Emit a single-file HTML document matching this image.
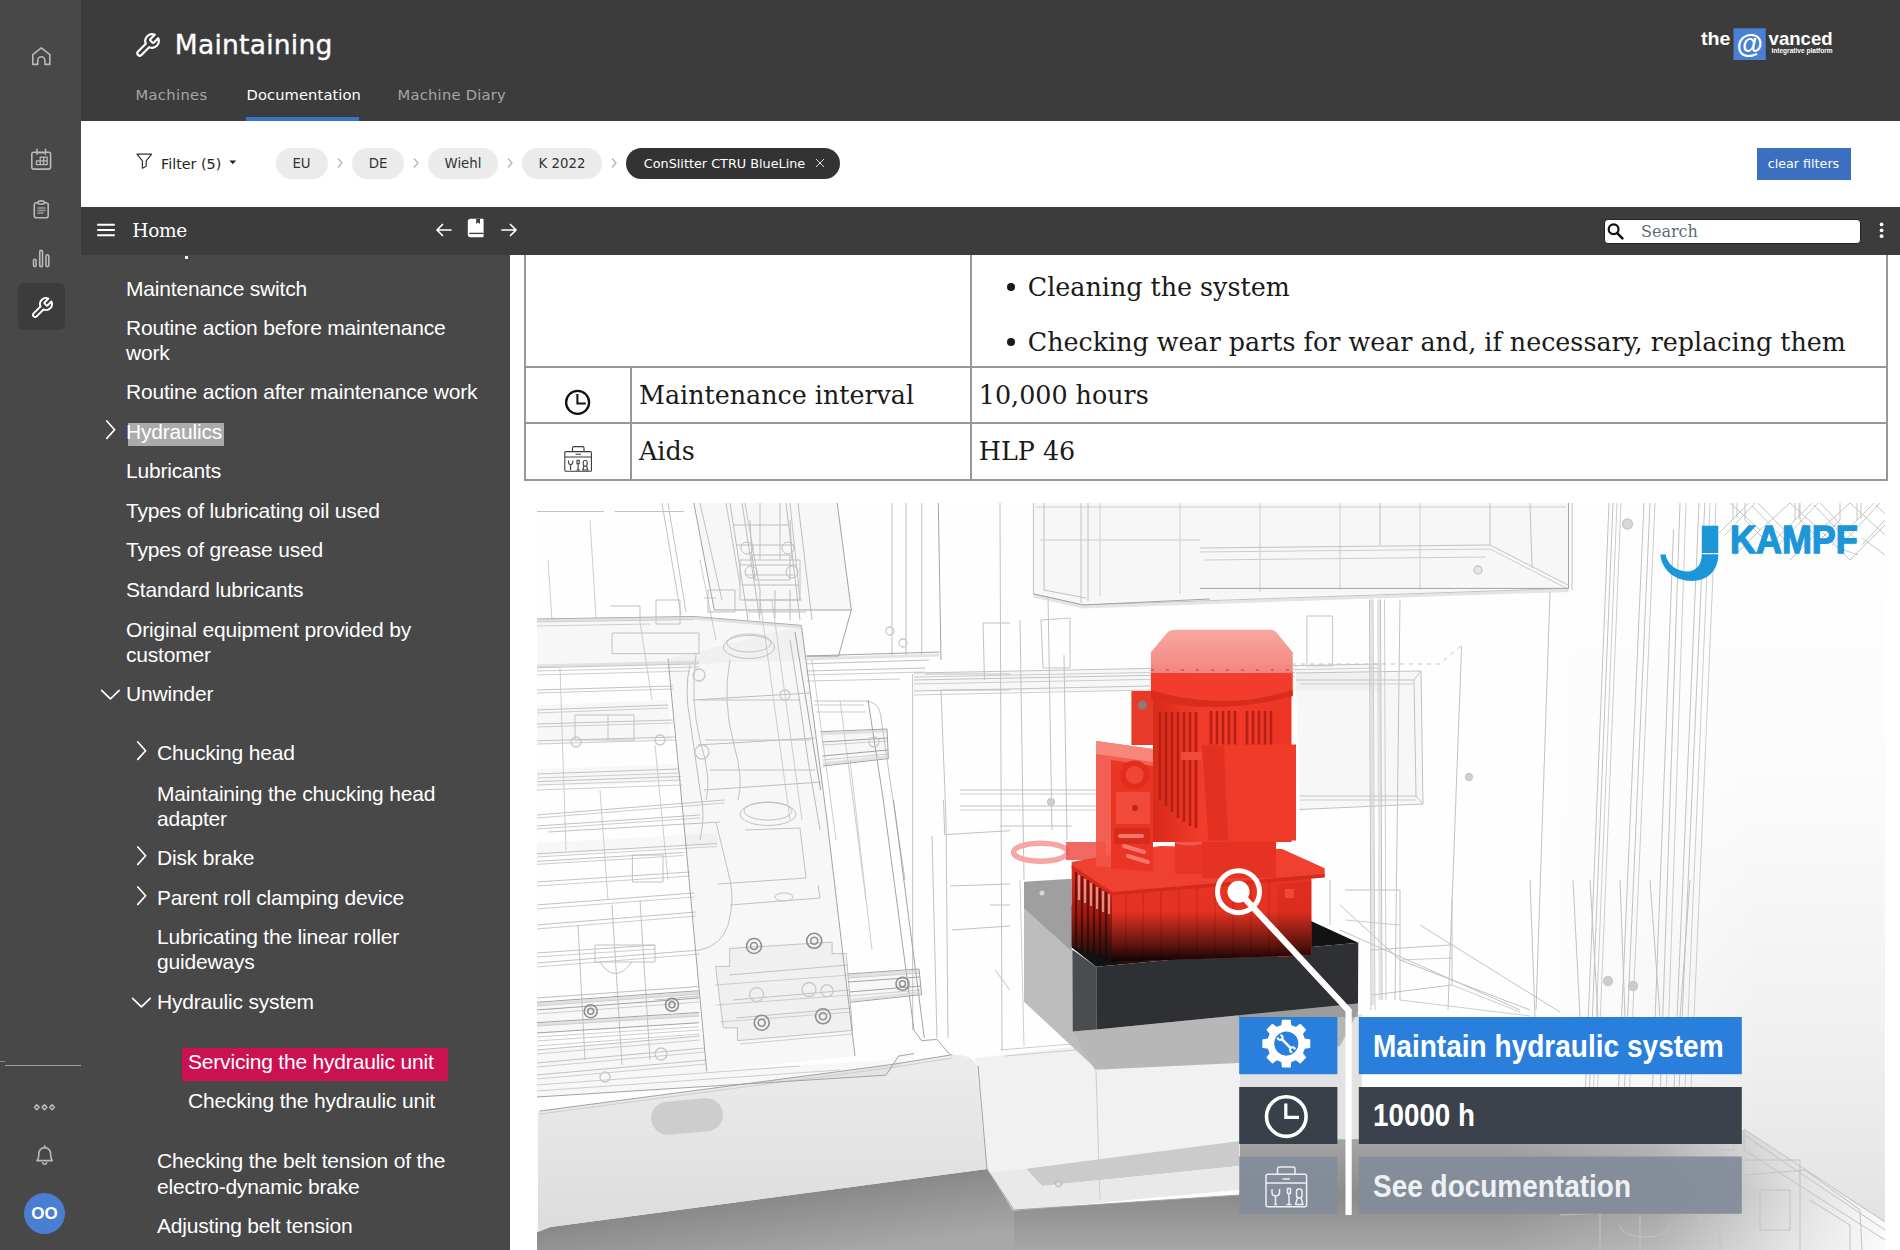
<!DOCTYPE html>
<html lang="en">
<head>
<meta charset="utf-8">
<title>Maintaining</title>
<style>
*{box-sizing:border-box;margin:0;padding:0}
html,body{width:1900px;height:1250px;overflow:hidden;background:#484848;font-family:"Liberation Sans",sans-serif}
.abs{position:absolute}
#rail{position:absolute;left:0;top:0;width:80.5px;height:1250px;background:#484848}
#rail svg{position:absolute;fill:none;stroke:#b9b9b9;stroke-width:1.6;stroke-linecap:round;stroke-linejoin:round}
#rail .active{position:absolute;left:17.5px;top:283px;width:47.5px;height:46.5px;border-radius:6px;background:#3c3c3c}
#rail .sep{position:absolute;left:5px;top:1065px;width:76px;height:1px;background:#9c9c9c}
#rail .sep2{position:absolute;left:0;top:1061px;width:5px;height:1px;background:#8a8a8a}
#rail .avatar{position:absolute;left:24px;top:1193px;width:41px;height:41px;border-radius:50%;background:#4a7ed2;color:#fff;font-size:17px;font-weight:bold;text-align:center;line-height:41px}
#header{position:absolute;left:80.5px;top:0;width:1819.5px;height:120.5px;background:#3c3c3c;font-family:"DejaVu Sans","Liberation Sans",sans-serif}
#header h1{position:absolute;left:94.3px;top:28.6px;font-size:26.5px;font-weight:normal;color:#fff;line-height:32px;letter-spacing:.25px;-webkit-text-stroke:.35px #fff}
#header .tab{position:absolute;top:85px;font-size:14.7px;color:#a6a6a6;line-height:20px;letter-spacing:.1px}
#header .tab.on{color:#fff}
#header .underline{position:absolute;left:165.5px;top:117px;width:112.5px;height:4px;background:#3a73cc}
#filter{position:absolute;left:80.5px;top:120.5px;width:1819.5px;height:86.5px;background:#fff;font-family:"DejaVu Sans","Liberation Sans",sans-serif}
#filter .lbl{position:absolute;left:80.5px;top:33.4px;font-size:14.3px;color:#222;line-height:20px}
.chip{position:absolute;top:27px;height:31px;border-radius:16px;background:#ebebeb;color:#333;font-size:13.3px;line-height:31px;text-align:center}
.chip.dark{background:#333;color:#fff}
.sepc{position:absolute;top:36.5px;fill:none;stroke:#b0b0b0;stroke-width:1.2}
#clear{position:absolute;left:1676px;top:27px;width:94px;height:32px;background:#3c6fc0;color:#fff;font-size:12.7px;line-height:32px;text-align:center}
#toolbar{position:absolute;left:80.5px;top:206.6px;width:1819.5px;height:48.2px;background:#3c3c3c}
#toolbar .home{position:absolute;left:51.8px;top:11.9px;font-family:"DejaVu Serif","Liberation Serif",serif;font-size:18.6px;letter-spacing:-.35px;color:#fff;line-height:26px}
#search{position:absolute;left:1523px;top:12.2px;width:257px;height:24.8px;border-radius:4px;background:#fff;border:1px solid #222;color:#5f6b78;font-family:"DejaVu Serif","Liberation Serif",serif;font-size:16px;line-height:23.4px;padding-left:36.5px}
#tree{position:absolute;left:81px;top:255px;width:429px;height:995px;background:#484848;color:#fff;font-size:21px;letter-spacing:-.19px;line-height:25px;overflow:hidden}
#tree div{position:absolute;white-space:nowrap;margin-top:0.5px;margin-left:-1px}
#tree svg{position:absolute;fill:none;stroke:#fff;stroke-width:1.7;stroke-linecap:round;stroke-linejoin:round}
#doc{position:absolute;left:510px;top:255px;width:1390px;height:995px;background:#fff;overflow:hidden;font-family:"DejaVu Serif","Liberation Serif",serif;font-size:25px;color:#1a1a1a}
#doc .tl{position:absolute}
#doc .tx{position:absolute;white-space:nowrap;font-size:25.36px;line-height:32px;letter-spacing:0;margin-top:1px}
#doc .bl{position:absolute;width:8px;height:8px;border-radius:50%;background:#1a1a1a}
#gap{position:absolute;left:500px;top:255px;width:10px;height:995px;background:#3d3d3d}
</style>
</head>
<body>
<div id="rail">
  <div class="active"></div>

  <svg style="left:29px;top:44px" width="24" height="24" viewBox="29 44 24 24"><path d="M41.3 47.9 L32.8 54.6 V64.4 H37.7 V60.4 A3.6 3.6 0 0 1 44.9 60.4 V64.4 H49.8 V54.6 Z"/></svg>
  <svg style="left:29px;top:146px" width="24" height="26" viewBox="29 146 24 26"><rect x="31.8" y="152.3" width="18.8" height="16.8" rx="2"/><path d="M37 149.3 V154.3 M45.5 149.3 V154.3 M37 152.8 H45.5" /><path d="M40.2 157.2 H47.2 V164.6 H36.4 V160.9 H47.2 M40.2 157.2 V164.6 M43.7 157.2 V164.6" stroke-width="1.3"/></svg>
  <svg style="left:29px;top:197px" width="24" height="24" viewBox="29 197 24 24"><rect x="34.3" y="202.8" width="13.9" height="15" rx="2"/><ellipse cx="41.2" cy="202.6" rx="3.4" ry="1.7" fill="#484848"/><path d="M38 208 H45 M38 210.5 H45 M38 213 H43" stroke-width="1.6" stroke="#9a9a9a"/></svg>
  <svg style="left:29px;top:246px" width="24" height="24" viewBox="29 246 24 24" stroke-width="1.3"><rect x="33.5" y="259.2" width="2.6" height="7.4" rx="1.3"/><rect x="39.7" y="250.4" width="2.8" height="16.2" rx="1.4"/><rect x="46" y="254.8" width="2.8" height="11.8" rx="1.4"/></svg>
  <svg style="left:30px;top:296px;stroke:#fff;stroke-width:1.9" width="24" height="24" viewBox="0 0 24 24"><path d="M14.7 6.3a1 1 0 0 0 0 1.4l1.6 1.6a1 1 0 0 0 1.4 0l3.77-3.77a6 6 0 0 1-7.94 7.94l-6.91 6.91a2.12 2.12 0 0 1-3-3l6.91-6.91a6 6 0 0 1 7.94-7.94l-3.76 3.76z"/></svg>
  <svg style="left:32px;top:1101px" width="26" height="12" viewBox="32 1101 26 12" stroke-width="1"><path d="M34.4 1107.3 l2.4 -2.4 l2.4 2.4 l-2.4 2.4z M42.1 1107.3 l2.4 -2.4 l2.4 2.4 l-2.4 2.4z M49.7 1107.3 l2.4 -2.4 l2.4 2.4 l-2.4 2.4z"/></svg>
  <svg style="left:33px;top:1142px" width="24" height="26" viewBox="33 1142 24 26" stroke-width="1.4"><path d="M37 1160.6 H52.4 C50.6 1158.8 50.6 1157 50.6 1153.5 A5.9 5.9 0 0 0 38.8 1153.5 C38.8 1157 38.8 1158.8 37 1160.6 Z M44.7 1147.6 V1145.8 M42.7 1162.8 A2.1 2.1 0 0 0 46.7 1162.8"/></svg>
  <div class="sep"></div><div class="sep2"></div>
  <div class="avatar">OO</div>
</div>
<div id="header">
  <svg style="position:absolute;left:53.5px;top:31.5px;fill:none;stroke:#fff;stroke-width:1.9;stroke-linecap:round;stroke-linejoin:round" width="27" height="27" viewBox="0 0 24 24"><path d="M14.7 6.3a1 1 0 0 0 0 1.4l1.6 1.6a1 1 0 0 0 1.4 0l3.77-3.77a6 6 0 0 1-7.94 7.94l-6.91 6.91a2.12 2.12 0 0 1-3-3l6.91-6.91a6 6 0 0 1 7.94-7.94l-3.76 3.76z"/></svg>
  <h1>Maintaining</h1>
  <div class="tab" style="left:55px;letter-spacing:.35px">Machines</div>
  <div class="tab on" style="left:166px">Documentation</div>
  <div class="tab" style="left:317px;letter-spacing:.25px">Machine Diary</div>
  <div class="underline"></div>
  <svg style="position:absolute;left:1615px;top:24px" width="145" height="40" viewBox="1696 24 145 40" font-family="Liberation Sans, sans-serif" font-weight="bold" fill="#fff">
    <text x="1701" y="44.6" font-size="18.5" textLength="29.5" lengthAdjust="spacingAndGlyphs">the</text>
    <rect x="1733.5" y="28.3" width="32.2" height="31.7" fill="#4a7fd4"/>
    <text x="1749.6" y="53" font-size="27" text-anchor="middle">@</text>
    <text x="1768.6" y="44.6" font-size="18.5" textLength="64" lengthAdjust="spacingAndGlyphs">vanced</text>
    <text x="1771.4" y="52.6" font-size="6.5" textLength="61.3" lengthAdjust="spacingAndGlyphs">integrative platform</text>
  </svg>
</div>
<div id="filter">
  <svg style="position:absolute;left:54px;top:31px;fill:none;stroke:#333;stroke-width:1.2;stroke-linejoin:round" width="20" height="20" viewBox="135 152 20 20"><path d="M136.9 154.2 H151.6 L146.2 160.8 V166.2 L142.4 168.3 V160.8 Z"/></svg>
  <div class="lbl">Filter (5)</div>
  <svg style="position:absolute;left:148px;top:39px" width="8" height="5" viewBox="0 0 8 5"><path d="M0.4 0.4 H7.2 L3.8 4.2 Z" fill="#222"/></svg>
  <div class="chip" style="left:195px;width:52px">EU</div>
  <div class="chip" style="left:271.5px;width:52px">DE</div>
  <div class="chip" style="left:347.5px;width:70px">Wiehl</div>
  <div class="chip" style="left:441.5px;width:80px">K 2022</div>
  <svg class="sepc" style="left:255px" width="8" height="12" viewBox="0 0 8 12"><path d="M2 1.5 L6 6 L2 10.5"/></svg>
  <svg class="sepc" style="left:331px" width="8" height="12" viewBox="0 0 8 12"><path d="M2 1.5 L6 6 L2 10.5"/></svg>
  <svg class="sepc" style="left:425px" width="8" height="12" viewBox="0 0 8 12"><path d="M2 1.5 L6 6 L2 10.5"/></svg>
  <svg class="sepc" style="left:529px" width="8" height="12" viewBox="0 0 8 12"><path d="M2 1.5 L6 6 L2 10.5"/></svg>
  <div class="chip dark" style="left:545.3px;width:214.7px;text-align:left;padding-left:18px;font-size:12.8px">ConSlitter CTRU BlueLine</div>
  <svg style="position:absolute;left:734px;top:37px;fill:none;stroke:#ddd;stroke-width:1" width="10" height="10" viewBox="0 0 10 10"><path d="M1 1 L9 9 M9 1 L1 9"/></svg>
  <div id="clear">clear filters</div>
</div>
<div id="toolbar">
  <svg style="position:absolute;left:15px;top:15px;stroke:#fff;stroke-width:2;fill:none" width="20" height="16" viewBox="0 0 20 16"><path d="M1.2 2.8 H18.8 M1.2 8 H18.8 M1.2 13.2 H18.8"/></svg>
  <div class="home">Home</div>
  <svg style="position:absolute;left:354px;top:16px;stroke:#fff;stroke-width:1.7;fill:none;stroke-linecap:round;stroke-linejoin:round" width="18" height="14" viewBox="0 0 18 14"><path d="M16 7 H2 M7.5 1.5 L2 7 L7.5 12.5"/></svg>
  <svg style="position:absolute;left:386px;top:11px" width="18" height="20" viewBox="0 0 18 20"><path d="M3.6 0.8 H15.8 A0.8 0.8 0 0 1 16.6 1.6 V18.4 A0.8 0.8 0 0 1 15.8 19.2 H3.4 A2.6 2.6 0 0 1 0.8 16.6 V3.6 A2.8 2.8 0 0 1 3.6 0.8 Z" fill="#fff"/><path d="M9.2 0.8 H13 V6 L11.1 4.5 L9.2 6 Z" fill="#3d3d3d"/><path d="M2.2 15.4 H16.6" stroke="#3d3d3d" stroke-width="1.3"/></svg>
  <svg style="position:absolute;left:419px;top:16px;stroke:#fff;stroke-width:1.7;fill:none;stroke-linecap:round;stroke-linejoin:round" width="18" height="14" viewBox="0 0 18 14"><path d="M2 7 H16 M10.5 1.5 L16 7 L10.5 12.5"/></svg>
  <div id="search">Search</div>
  <svg style="position:absolute;left:1526px;top:15px;stroke:#111;stroke-width:2.2;fill:none;stroke-linecap:round" width="20" height="20" viewBox="1607 222 20 20"><circle cx="1613.6" cy="229.3" r="4.9"/><path d="M1617.4 233.4 L1622.4 238.4" stroke-width="2.6"/></svg>
  <svg style="position:absolute;left:1796px;top:13px" width="10" height="22" viewBox="0 0 10 22" fill="#fff"><circle cx="4.6" cy="4.4" r="1.9"/><circle cx="4.6" cy="10.3" r="1.9"/><circle cx="4.6" cy="16.2" r="1.9"/></svg>
</div>
<div id="tree">
<div class="hl" style="left:46.5px;top:167.6px;width:96px;height:23.2px;background:#ababab;margin:0"></div>
<div class="hl" style="left:101.1px;top:792.8px;width:266.2px;height:33.6px;background:#cc1152;margin:0"></div>
<div class="hl" style="left:105px;top:0;width:3px;height:3px;background:#eee"></div>
<div style="left:46px;top:20.5px">Maintenance switch</div>
<div style="left:46px;top:59.5px">Routine action before maintenance</div>
<div style="left:46px;top:84.5px">work</div>
<div style="left:46px;top:123.5px">Routine action after maintenance work</div>
<div style="left:46px;top:163.5px">Hydraulics</div>
<svg style="left:23.0px;top:165.0px" width="13" height="20" viewBox="0 0 13 20"><path d="M2.8 1 L10.6 9.7 L2.8 18.4"/></svg>
<div style="left:46px;top:202.5px">Lubricants</div>
<div style="left:46px;top:242.5px">Types of lubricating oil used</div>
<div style="left:46px;top:281.5px">Types of grease used</div>
<div style="left:46px;top:321.5px">Standard lubricants</div>
<div style="left:46px;top:361.5px">Original equipment provided by</div>
<div style="left:46px;top:386.5px">customer</div>
<div style="left:46px;top:425.5px">Unwinder</div>
<svg style="left:19.0px;top:433.0px" width="21" height="13" viewBox="0 0 21 13"><path d="M1.6 2.4 L10.4 10.9 L19.2 2.4"/></svg>
<div style="left:77px;top:484.5px">Chucking head</div>
<svg style="left:54.0px;top:486.0px" width="13" height="20" viewBox="0 0 13 20"><path d="M2.8 1 L10.6 9.7 L2.8 18.4"/></svg>
<div style="left:77px;top:525.5px">Maintaining the chucking head</div>
<div style="left:77px;top:550.5px">adapter</div>
<div style="left:77px;top:589.5px">Disk brake</div>
<svg style="left:54.0px;top:591.0px" width="13" height="20" viewBox="0 0 13 20"><path d="M2.8 1 L10.6 9.7 L2.8 18.4"/></svg>
<div style="left:77px;top:629.5px">Parent roll clamping device</div>
<svg style="left:54.0px;top:631.0px" width="13" height="20" viewBox="0 0 13 20"><path d="M2.8 1 L10.6 9.7 L2.8 18.4"/></svg>
<div style="left:77px;top:668.5px">Lubricating the linear roller</div>
<div style="left:77px;top:693.5px">guideways</div>
<div style="left:77px;top:733.5px">Hydraulic system</div>
<svg style="left:50.0px;top:741.0px" width="21" height="13" viewBox="0 0 21 13"><path d="M1.6 2.4 L10.4 10.9 L19.2 2.4"/></svg>
<div style="left:108px;top:793.5px">Servicing the hydraulic unit</div>
<div style="left:108px;top:832.5px">Checking the hydraulic unit</div>
<div style="left:77px;top:892.5px">Checking the belt tension of the</div>
<div style="left:77px;top:918.5px">electro-dynamic brake</div>
<div style="left:77px;top:957.5px">Adjusting belt tension</div>
</div>
<div id="doc">
<div class="tl" style="left:14px;top:-2px;width:1364px;height:228px;border:2px solid #979797"></div>
<div class="tl" style="left:460px;top:-2px;width:2px;height:228px;background:#979797"></div>
<div class="tl" style="left:120px;top:111px;width:2px;height:115px;background:#979797"></div>
<div class="tl" style="left:14px;top:111px;width:1364px;height:2px;background:#979797"></div>
<div class="tl" style="left:14px;top:167px;width:1364px;height:2px;background:#979797"></div>
<div class="tx" style="left:517.8px;top:15px">Cleaning the system</div>
<div class="tx" style="left:517.8px;top:70px">Checking wear parts for wear and, if necessary, replacing them</div>
<div class="bl" style="left:497px;top:28px"></div>
<div class="bl" style="left:497px;top:83px"></div>
<div class="tx" style="left:129px;top:123px">Maintenance interval</div>
<div class="tx" style="left:468.8px;top:123px">10,000 hours</div>
<div class="tx" style="left:129px;top:179px">Aids</div>
<div class="tx" style="left:468.8px;top:179px">HLP 46</div>
<svg style="position:absolute;left:50px;top:130px" width="36" height="36" viewBox="560 385 36 36" fill="none" stroke="#111" stroke-width="2.3"><circle cx="577.6" cy="402.4" r="11.5"/><path d="M577.4 394 V403.4 H585.8" stroke-width="2"/></svg>
<svg style="position:absolute;left:52px;top:188px" width="32" height="32" viewBox="562 443 32 32" fill="none" stroke="#3a3a3a" stroke-width="1.1"><rect x="564.8" y="451.6" width="26.6" height="19.6" rx="1"/><path d="M572.5 451.5 V448 Q572.5 446.6 574 446.6 H582.5 Q584 446.6 584 448 V451.5 M564.8 457 H591.4 M575.5 454.3 H581"/><path d="M568.5 460.5 V462.5 Q568.5 464.3 570.6 464.6 V470 M572.8 460.5 V462.5 Q572.8 464.3 570.8 464.6 M577 460.3 h2.2 v3.4 h-2.2z M578.1 463.7 V470 M576.5 470 h3.4"/><rect x="583.2" y="460.5" width="4" height="5.6" rx="1.8"/><path d="M584 466 L582.8 470 H587.8 L586.5 466"/></svg>
<!--ILLU_START--><svg id="illu" style="position:absolute;left:27px;top:248px" width="1348" height="747" viewBox="537 503 1348 747">
<defs>
<linearGradient id="gFloorL" gradientUnits="userSpaceOnUse" x1="770" y1="1198" x2="778.6" y2="1263"><stop offset="0" stop-color="#898989"/><stop offset="1" stop-color="#a8a8a8"/></linearGradient>
<linearGradient id="gFloorV" gradientUnits="userSpaceOnUse" x1="0" y1="1140" x2="0" y2="1250"><stop offset="0" stop-color="#a4a4a4"/><stop offset="0.5" stop-color="#8b8b8b"/><stop offset="1" stop-color="#a6a6a6"/></linearGradient>
<linearGradient id="gFloorH" gradientUnits="userSpaceOnUse" x1="1014" y1="0" x2="1885" y2="0"><stop offset="0" stop-color="#8b8b8b"/><stop offset="0.3" stop-color="#9e9e9e"/><stop offset="0.7" stop-color="#b8b8b8"/><stop offset="0.86" stop-color="#dcdcdc"/><stop offset="1" stop-color="#f4f4f4"/></linearGradient>
<linearGradient id="gFloor" x1="0" y1="0" x2="0" y2="1"><stop offset="0" stop-color="#8d8d8d"/><stop offset="1" stop-color="#c4c4c4"/></linearGradient>
<linearGradient id="gFloorR" x1="0" y1="0" x2="1" y2="0"><stop offset="0" stop-color="#fff" stop-opacity="0"/><stop offset="0.4" stop-color="#fff" stop-opacity="0.2"/><stop offset="0.75" stop-color="#fff" stop-opacity="0.7"/><stop offset="1" stop-color="#fff" stop-opacity="0.95"/></linearGradient>
<linearGradient id="gWall" x1="0" y1="0" x2="0" y2="1"><stop offset="0" stop-color="#ffffff"/><stop offset="0.4" stop-color="#fbfbfb"/><stop offset="0.75" stop-color="#f0f0f0"/><stop offset="1" stop-color="#e3e3e3"/></linearGradient>
<linearGradient id="gWallFade" x1="0" y1="0" x2="1" y2="0"><stop offset="0" stop-color="#fdfdfd" stop-opacity="1"/><stop offset="1" stop-color="#fdfdfd" stop-opacity="0"/></linearGradient>
<linearGradient id="gTank" x1="0" y1="0" x2="0" y2="1"><stop offset="0" stop-color="#f0382a"/><stop offset="0.45" stop-color="#e8301f"/><stop offset="0.8" stop-color="#7a1008"/><stop offset="1" stop-color="#111"/></linearGradient>
<linearGradient id="gTankO" x1="0" y1="0" x2="0" y2="1"><stop offset="0" stop-color="#000" stop-opacity="0"/><stop offset="0.4" stop-color="#000" stop-opacity="0.02"/><stop offset="0.8" stop-color="#000" stop-opacity="0.6"/><stop offset="1" stop-color="#000" stop-opacity="0.95"/></linearGradient>
<linearGradient id="gTankL" x1="0" y1="0" x2="0" y2="1"><stop offset="0" stop-color="#e0301f"/><stop offset="0.5" stop-color="#a01a10"/><stop offset="1" stop-color="#0c0c0c"/></linearGradient>
<linearGradient id="gCap" x1="0" y1="0" x2="0" y2="1"><stop offset="0" stop-color="#f7a39b"/><stop offset="1" stop-color="#f28078"/></linearGradient>
<linearGradient id="gBody" x1="0" y1="0" x2="1" y2="0"><stop offset="0" stop-color="#d92a1a"/><stop offset="0.35" stop-color="#f23c2c"/><stop offset="1" stop-color="#ee3525"/></linearGradient>
<linearGradient id="gBase" x1="0" y1="0" x2="0" y2="1"><stop offset="0" stop-color="#ececec"/><stop offset="1" stop-color="#dcdcdc"/></linearGradient>
</defs>
<rect x="537" y="503" width="1348" height="747" fill="#fefefe"/>
<g id="bg">
<!-- right wall gradient -->
<polygon points="1560,503 1885,503 1885,1222 1744,1129 1560,1135" fill="url(#gWall)"/>
<rect x="1560" y="503" width="200" height="640" fill="url(#gWallFade)"/>
<!-- floor -->
<polygon points="537,1250 537,1232 550,1227 987,1169 1014,1210 1016,1250" fill="url(#gFloorL)"/>
<polygon points="1014,1250 1014,1210 1240,1195 1240,1140 1745,1130 1885,1222 1885,1250" fill="url(#gFloorV)"/>
<polygon points="1500,1135 1745,1130 1885,1222 1885,1250 1500,1250" fill="url(#gFloorR)"/>
<!-- base block (right of base body) -->
<polygon points="1240,1028 1362,1014 1362,1139 1240,1141" fill="#e2e2e2"/>
<polygon points="975,1058 1240,1028 1240,1141 1026,1168.7 989.5,1172.6 987,1169" fill="#f1f1f1"/>
<polygon points="1026,1168.7 1239.5,1141 1239.5,1166 1042,1186" fill="#cbcbcb"/>
<polygon points="989.5,1172.6 1026,1168.7 1042,1186 1239.5,1166 1239.5,1189.7 1013,1210.8" fill="#e9e9e9"/>
<circle cx="1058.5" cy="1184" r="3" fill="#ddd" stroke="#aaa" stroke-width="0.8"/>
<!-- base body -->
<path d="M538 1111 L888.4 1065 L952.4 1054.7 Q972.9 1054 976 1066 L987 1169 L550.5 1227 L538 1232 Z" fill="url(#gBase)"/>
<rect x="651" y="1100" width="72" height="33" rx="16.5" fill="#cdcdcd" transform="rotate(-5 687 1116)"/>
</g>

<g id="wire" fill="none" stroke-width="1">
<g stroke="none" fill="#000" fill-opacity="0.028">
<polygon points="536.4,619 693.8,616.5 801.4,625.4 806,660 699,664 536.4,668"/>
<polygon points="536.4,705 668,700 672,740 536.4,745"/>
<polygon points="536.4,769 678.5,764 681,782 536.4,787"/>
<polygon points="536.4,843 717,833 718,845 536.4,856"/>
<polygon points="536.4,1002.3 699,990.7 700,1023 536.4,1034"/>
<polygon points="668,658.7 801.4,625.4 827,820 855,1056 706.7,1071.4 683.6,820"/>
<polygon points="820.6,731.7 887,729 888.4,758.6 823,766"/>
<polygon points="847.5,974 919,969 921.7,994.6 850,1002.3"/>
<polygon points="715.6,966.4 729.7,966.4 729.7,948.5 832.1,942.1 832.1,953.6 846.2,953.6 852.6,1030.4 737.4,1040.7 737.4,1027.9 723.3,1027.9"/>
<polygon points="536.4,1050 705,1036 706.7,1071 885.9,1060 898.7,1056 914,1053.5 885.9,1075.2 536.4,1097"/>
<polygon points="693.8,503 837.2,503 851.3,610 714.3,610"/>
<polygon points="1033.4,503 1568.5,503 1568.5,588.4 1083,605 1033.4,593.9"/>
<polygon points="1295.8,673 1421,671 1423,804 1299.5,809.5"/>
<polygon points="914,673 1380,664 1380,691 914,691"/>
</g>
<g stroke="#cdcdcd">
<path d="M536.4 622 L693.8 619.5 M536.4 626 L650 624 M536.4 671 L699 667 M536.4 675 L690 671 M536.4 693 L673 689 M536.4 713 L668 708 M536.4 727 L673.4 723 M536.4 744 L676 740 M536.4 778 L680 773 M536.4 785 L681 780 M536.4 790 L682 785 M536.4 818 L724.6 803"/>
<path d="M536.4 857 L717 846.5 M536.4 864.4 L683.6 855.5 M536.4 829 L700 818 M536.4 886 L690 876 M536.4 909 L694 897 M536.4 929 L696 916 M536.4 957 L655 949 M536.4 967 L700 954"/>
<path d="M536.4 1006 L699 994 M536.4 1026 L699 1016 M536.4 1037 L699 1026.7 M536.4 1014 L699 1002 M536.4 1041 L700 1030 M536.4 1046 L700 1034"/>
<path d="M536.4 1067 L705 1052 M536.4 1079 L706 1064 M536.4 1054 L700 1040 M536.4 1085 L800 1066 M536.4 1091 L840 1070"/>
<path d="M540 1114 L888.4 1068 L952.4 1058"/>
<path d="M548 560 L552 620 M590 520 L596 618 M640 622 L652 700 M560 668 L566 850 M600 790 L608 900 M655 745 L668 880"/>
<path d="M700 560 L716 640 M760 600 L790 820 M772 600 L802 820 M812 660 L836 840 M840 700 L866 900 M850 760 L872 950"/>
<path d="M806.5 675 L925 672 M806.5 681 L900 679 M814 705 H864 M816 712 H866 M822 745 L887.5 741 M822.5 760 L888 754 M848 978 L920 973 M849 996 L921 990"/>
<path d="M715 985 L850 975 M716 1005 L851 995 M720 1022 L852 1012 M740 1044 L853 1034"/>
<path d="M1036 507 H1566 M1040 540 H1200 M1100 503 V596 M1180 503 V594 M1260 503 V592 M1340 503 V590 M1420 503 V590"/>
<path d="M914 677 L1380 668 M914 684 L1295 676.5 M914 695 L1150 690 M960 794 H1096 M960 810 H1096"/>
<path d="M1000 1050 L1240 1030 M1005 1056 L1240 1036 M1020 880 L1024 1046 M1096 1071 L1100 1200"/>
<path d="M1373 599.5 L1375 1010 M1384.5 599.5 L1386 1000 M1300 684 L1414 684 M1300 800 L1416 800"/>
<path d="M1200 552 L1490 549 L1568 589 M1204 560 L1486 557"/>
<path d="M1617 503 L1593 1100 M1621 503 L1597 1100 M1655 503 L1629 1100 M1686 503 L1666 1100 M1710 503 L1683 1135 M1716 503 L1689 1135"/>
<path d="M1400 1000 L1530 1016 M1452 985 L1520 1012 M1345 920 L1400 925 M1400 960 L1452 958"/>
</g>

<g stroke="#c2c2c2">
<!-- top-left region -->
<path d="M536.4 511.5 H604 M614.5 511.5 H683.6"/>
<path d="M662 503 L681 615 M668 503 L686 612 M700 503 L722 600 M726 503 L740 585 M745 503 L760 590 M790 503 L800 600"/>
<path d="M892 503 V655 M906 503 V655 M921.7 503 V655"/>
<path d="M536.4 667.7 L699 663.8 M536.4 690 L673 686 M536.4 710 L668 705 M536.4 724 L673.4 720 M536.4 740.8 L676 737 M536.4 774 L678.5 769 M536.4 781.6 L681 776.5 M536.4 815 L724.6 800"/>
<path d="M612 633 H699 V653.6 H612 Z M610.6 606 H640 V622 M656 600 H680 V624 H656 Z"/>
<path d="M575 715 H634 V740 H575 Z M608 715 V740"/>
<path d="M749 647 m-25.6 0 a25.6 11.5 0 1 0 51.2 0 a25.6 11.5 0 1 0 -51.2 0 M749 643 m-22 0 a22 9 0 1 0 44 0 a22 9 0 1 0 -44 0"/>
<path d="M740 560 H800 V600 H740 Z M745 575 H795 M750 520 L752 560 M790 520 L792 560 M760 503 V560 M780 503 V560"/>
<path d="M696 655 Q690 700 700 740 Q712 780 706 800 M730 660 Q722 700 734 745 Q744 780 738 800"/>
<path d="M700 700 H800 M705 740 H810 M710 770 H815"/>
<!-- mid-left -->
<path d="M536.4 853.8 L717 843.5 M536.4 861.4 L683.6 852.5 M536.4 826 L700 815 M548 832 L720 822"/>
<path d="M632.4 855 H663 V882 H632.4 Z"/>
<path d="M768 814 m-28 0 a28 11.5 0 1 0 56 0 a28 11.5 0 1 0 -56 0 M768 811 m-24 0 a24 9 0 1 0 48 0 a24 9 0 1 0 -48 0"/>
<path d="M536.4 882 L690 872 M536.4 905 L694 893 M536.4 925 L696 912 M536.4 953 L655 945 M536.4 963 L700 950"/>
<path d="M536.4 1063 L705 1048 M536.4 1075 L706 1060 M536.4 1050 L700 1036"/>
<path d="M578 925 L585 1060 M612 905 L622 1065 M640 900 L650 1060"/>
<path d="M595 945 H655 V962 H595 Z M600 962 Q615 985 632 962"/>
<path d="M715.6 966.4 H729.7 V948.5 L832.1 942.1 V953.6 H846.2 L852.6 1030.4 L737.4 1040.7 V1027.9 H723.3 Z"/>
<path d="M729 975 L848 965 M733 1000 L850 990 M736 1018 L851 1008"/>
<path d="M716 822 L730 880 Q735 900 728 925 Q722 945 700 950 M745 830 L800 828 L806 878 L718 884"/>
<path d="M775 897 a9 4 0 1 0 18 0 a9 4 0 1 0 -18 0"/>
<path d="M730 905 L820 898 L818 885"/>
<!-- right-of-carriage -->
<path d="M814 701 H865.4 Q879 702 880.7 715 L888.4 768.8 L896 820 L905 880"/>
<path d="M806.5 663.8 L929.4 660 M806.5 671 L925 668"/>
<path d="M912.7 674 V1030 M941 690.7 L946 820 L948 1038"/>
<path d="M925 674 H1010 M941 690 H1010"/>
<path d="M983 623 H1010 M983 623 L984.5 680"/>
<path d="M943.5 800 L944.7 834.6 L1010 830.7"/>
<path d="M932 835.8 L937 1038"/>
<path d="M950 886 L1010 884 M952 930 L1010 926 M990 905 L1010 905 M995 970 L1010 990"/>
<!-- middle region (behind motor) -->
<path d="M1033.4 503 V593.9 L1083 605 L1568.5 588.4 M1044 503 V590 L1086 598"/>
<path d="M1081 503 V603 M1088 503 V601"/>
<path d="M914 673 L1380 664 M914 680 L1295 672.5 M914 691 L1150 686"/>
<path d="M1041 620 L1070 618 V668 H1043 Z"/>
<path d="M1000 503 L1002 1050 M1020 620 L1024 880"/>
<path d="M960 790 H1096 M960 806 H1096 M1000 826 H1072"/>
<path d="M1048 596 L1052 830 M1064 655 L1067 840"/>
<!-- right region -->
<path d="M1306.9 616 H1332.6 V665.8 H1306.9 Z"/>
<path d="M1292 664 H1439.5 L1461.6 645.5" stroke-dasharray="4 5"/>
<path d="M1295.8 673 L1421 671 L1423 804 L1299.5 809.5 M1421 671 L1414 680 L1416 796 L1423 804 M1296 680 L1414 680 M1300 796 L1416 796"/>
<path d="M1369.5 599.5 L1371 1010 M1380.5 599.5 L1382 1000"/>
<path d="M1461.6 645.5 L1448 1010 M1550 592 L1536 1010 M1400 600 L1395 1000"/>
<path d="M1200 548 L1490 545 L1568 585 M1490 503 V545 M1530 503 L1532 568 M1380 503 V545"/>
<path d="M1568.5 503 V588.4 M1572 503 V590"/>
<path d="M1609 503 L1585 1100 M1613 503 L1589 1100 M1644 503 L1618 1100 M1650 503 L1624 1100 M1673.5 530 L1652 1100 M1680 503 L1660 1100 M1704.8 503 L1677 1135 M1699 503 L1672 1135"/>
<path d="M1730 503 L1760 530 L1790 503 L1820 530 L1850 503 L1885 535 M1735 555 L1760 530 M1790 560 L1820 530 L1850 560 L1885 525 M1745 503 L1745 520 L1765 540 M1800 503 V520 L1820 540 L1840 520 V503"/>
<!-- bottom-right -->
<path d="M1330 880 L1330 925 M1340 905 L1400 960 L1530 1010 M1345 890 H1400 V1000"/>
<path d="M1370 950 L1450 945 M1372 995 L1452 985 L1452 900"/>
<path d="M1530 880 L1535 1017 M1573 880 L1580 1017 M1590 880 L1598 1017 M1620 880 L1625 1017 M1650 880 L1660 1017 M1690 880 L1680 1017"/>
<path d="M1340 930 L1520 1010 M1420 925 L1560 1012"/>
<path d="M1744 1129 L1885 1222 M1744 1135 L1885 1230 M1744 1129 V1150 L1885 1240"/>
<path d="M1740 1160 H1800 V1250 M1745 1175 L1805 1170 L1860 1210 L1862 1250 M1760 1190 H1790 V1230 H1760 Z M1810 1200 L1850 1225 V1250 M1712 1150 h22 v-8 h-22z"/>
<path d="M1560 1215 L1600 1213 V1250 M1620 1225 a25 12 0 1 0 50 0 M1700 1215 V1250 M1720 1210 V1250 M1640 1216 V1250"/>
</g>
<g stroke="#a3a3a3">
<path d="M536.4 619 L693.8 616.5 L801.4 625.4 L827 820 L855 1056"/>
<path d="M795 632 L820.6 790 M668 658.7 L683.6 820 L706.7 1071.4"/>
<path d="M693.8 503 L714.3 610 H851.3 M837.2 503 L851.3 610 L838.5 656.2 H806.5"/>
<path d="M938.3 503 L941 660 M806.5 656 L939.6 652"/>
<path d="M820.6 731.7 L887 729 L888.4 758.6 L823 766 M822 742 L887.5 738 M822.5 756 L888 750"/>
<path d="M536.4 1002.3 L699 990.7 M536.4 1022.7 L699 1012.5 M536.4 1033 L699 1022.7 M536.4 1010 L699 998"/>
<path d="M847.5 974 L919 969 L921.7 994.6 L850 1002.3 M848 982 L920 977 M849 992 L921 986"/>
<path d="M883.3 800 L914 1030.4 L921.7 1040.7 L937 1039.4 L949.9 1054.7 M893.5 800 L924.3 1038 M868 700 L883.3 800"/>
<path d="M536.4 1097 L885.9 1075.2 L898.7 1056 L914 1053.5 M540 1111 L888.4 1065 L952.4 1054.7"/>
<path d="M1033.4 593.9 L1083 605 L1210 599"/>
<path d="M1200 588.4 H1568.5 V503"/>
<path d="M978 1066 L987 1169 L1014 1210 L1240 1195"/>
</g>

<g stroke="#bdbdbd">
<!-- tower structure top-left -->
<path d="M730 503 L748 620 M742 503 L760 620 M786 503 L800 620 M798 503 L812 620"/>
<path d="M733 525 H790 M736 545 H793 M739 565 H796 M742 585 H799 M745 600 H802 M748 612 H806"/>
<path d="M741 548 a6 6 0 1 0 12 0 a6 6 0 1 0 -12 0 M782 548 a6 6 0 1 0 12 0 a6 6 0 1 0 -12 0 M745 572 a6 6 0 1 0 12 0 a6 6 0 1 0 -12 0 M786 572 a6 6 0 1 0 12 0 a6 6 0 1 0 -12 0"/>
<path d="M752 555 H790 V580 H755 Z M760 590 V615 M775 590 V618 M790 590 V620"/>
<path d="M708 590 H735 V612 H708 Z M704 598 L716 598"/>
<!-- carriage inner contours -->
<path d="M690 665 Q684 690 690 720 L700 790 Q706 815 700 840 M790 640 Q800 700 808 760 L820 830"/>
<path d="M693 700 L810 693 M698 745 L815 738 M704 790 L822 782"/>
<path d="M655 1000 L700 996 M536.4 998 L699 986.5"/>
</g>
<g stroke="#d0d0d0" stroke-width="3" opacity="0.55">
<path d="M536.4 620.5 L693.8 618 L801.4 627"/>
<path d="M536.4 666 L699 662"/>
<path d="M536.4 1004.3 L699 992.7 M536.4 1024.7 L699 1014.5"/>
<path d="M847.5 976 L919 971 M850 1000.3 L921.7 992.6"/>
<path d="M820.6 733.7 L887 731 M823 764 L888.4 756.6"/>
<path d="M1033.4 596 L1083 607 L1568.5 590.4"/>
<path d="M1371.5 599.5 L1373 1005 M1378.5 599.5 L1380 1000"/>
<path d="M806.5 659 L939.6 655"/>
</g>
<!-- bolts -->
<g stroke="#8e8e8e" stroke-width="1.6">
<circle cx="590.7" cy="1011.2" r="6.5"/><circle cx="672" cy="1004.8" r="6.5"/><circle cx="754" cy="946" r="7.5"/><circle cx="814.2" cy="940.8" r="7.5"/><circle cx="761.7" cy="1022.7" r="7.5"/><circle cx="823" cy="1016.3" r="7.5"/><circle cx="902.5" cy="983.8" r="6.5"/>
<circle cx="590.7" cy="1011.2" r="3"/><circle cx="672" cy="1004.8" r="3"/><circle cx="754" cy="946" r="3.5"/><circle cx="814.2" cy="940.8" r="3.5"/><circle cx="761.7" cy="1022.7" r="3.5"/><circle cx="823" cy="1016.3" r="3.5"/><circle cx="902.5" cy="983.8" r="3"/>
</g>
<g stroke="#c8c8c8" stroke-width="1.3">
<circle cx="756.6" cy="994.6" r="7"/><circle cx="809" cy="989.5" r="7"/><circle cx="827" cy="990.7" r="6"/><circle cx="661" cy="1054" r="6"/><circle cx="605" cy="1077" r="5"/>
<circle cx="576" cy="742" r="5"/><circle cx="660" cy="740" r="5"/><circle cx="702" cy="752" r="7"/><circle cx="890" cy="631" r="4"/><circle cx="903" cy="643" r="4"/>
<circle cx="699" cy="675" r="6"/><circle cx="785" cy="695" r="5"/><circle cx="874" cy="742" r="5"/>
<circle cx="1627.5" cy="524" r="5" fill="#d8d8d8"/><circle cx="1478" cy="570" r="4" fill="#e6e6e6"/><circle cx="1469" cy="777" r="3.5" fill="#d0d0d0"/><circle cx="1051" cy="802" r="3.5" fill="#d0d0d0"/>
<circle cx="1608" cy="981" r="4.5" fill="#ccc"/><circle cx="1633" cy="986" r="4.5" fill="#ccc"/>
</g>
</g>

<g id="motor">
<!-- gray plate -->
<polygon points="1024,908.6 1074,951.5 1074,1031.4 1097,1069.8 1024,1001.7" fill="#bababa" opacity="0.96"/>
<polygon points="1024,881.7 1071.7,878.8 1071.7,951 1024,908.6" fill="#9c9c9c" opacity="0.97"/>
<polygon points="1073,1031.4 1096.3,1029.4 1358,1003.6 1358,1012 1340,1046 1238,1063 1095,1069.8" fill="#b4b4b4" opacity="0.96"/>
<polygon points="1238,1008 1358,1004 1358,1017 1238,1017" fill="#8a8a8a" opacity="0.6"/>
<circle cx="1042" cy="893" r="2.5" fill="#d8d8d8"/>
<!-- tray inner -->
<polygon points="1071.7,905 1311,900 1311,921 1358.3,942.7 1096.3,966.7 1071.7,947.6" fill="#121212"/>
<!-- tray faces -->
<polygon points="1072.5,949.8 1096.3,966.7 1096.3,1029.4 1072.8,1031.4" fill="#4a4d50"/>
<polygon points="1096.3,966.7 1358.3,942.7 1358,1003.6 1096.3,1029.4" fill="#2e3033"/>
<!-- hose loop -->
<ellipse cx="1040.6" cy="852.2" rx="27" ry="9" fill="none" stroke="#f6a6a4" stroke-width="5.5"/>
<rect x="1066" y="842" width="40" height="18" fill="#ee5a50" opacity="0.9"/>
<!-- tank left face with fins -->
<polygon points="1071.7,867 1112,894 1112,962 1071.7,946" fill="url(#gTankL)"/>
<g stroke="#1a0503" stroke-opacity="0.55" stroke-width="2.2">
<path d="M1076 872 V948 M1082 876 V950 M1088 880 V953 M1094 884 V955 M1100 888 V957 M1106 892 V960"/>
</g>
<g stroke="#f7b0a8" stroke-opacity="0.75" stroke-width="2.2">
<path d="M1079 875 V900 M1085 879 V903 M1091 883 V906 M1097 887 V909 M1103 891 V912 M1109 894 V914"/>
</g>
<!-- tank front face -->
<polygon points="1112,894 1311.3,877.5 1311.3,955 1112,962" fill="#e93323"/>
<g stroke="#b01d10" stroke-opacity="0.55" stroke-width="1">
<path d="M1126 893 V960 M1143 891.5 V960 M1161 890 V960 M1179 888.5 V959 M1197 887 V958 M1215 885.5 V958 M1233 884 V957 M1251 882.5 V957 M1269 881 V956"/>
</g>
<polygon points="1277.7,885 1311.3,880.5 1311.3,955 1277.7,957" fill="#df2e1f"/>
<rect x="1285" y="889" width="9" height="9" fill="#f24a3a"/>
<polygon points="1112,894 1311.3,877.5 1311.3,955 1112,962" fill="url(#gTankO)"/>
<!-- tank top plate -->
<polygon points="1071.7,862 1160,846 1282.2,849.1 1324.7,868.2 1324.7,876 1112,894 1071.7,867" fill="#f04030"/>
<polygon points="1071.7,865 1112,892 1324.7,874 1324.7,877.5 1112,895.5 1071.7,868.5" fill="#d42a1c"/>
<!-- left valve block -->
<polygon points="1131.4,691 1155,691 1155,745 1131.4,745" fill="#e83a2b"/>
<circle cx="1142.5" cy="705" r="4.5" fill="#8f7a78"/>
<polygon points="1096,741 1153,749 1153,872 1096,866" fill="#f25446" opacity="0.93"/>
<polygon points="1096,741 1153,749 1153,762 1096,754" fill="#f7877d"/>
<polygon points="1111,760 1153,766 1153,872 1111,868" fill="#ea3424"/>
<circle cx="1134.7" cy="775" r="14.5" fill="#e22c1d"/>
<circle cx="1134.7" cy="775" r="9" fill="#f04535"/>
<rect x="1116" y="792" width="34" height="32" fill="#f14a3b"/>
<rect x="1114" y="828" width="36" height="16" fill="#d92b1c"/>
<circle cx="1135" cy="808" r="3" fill="#c02417"/>
<path d="M1120 836 h22 M1124 846 l20 6 M1128 856 l20 6" stroke="#f7776c" stroke-width="4" stroke-linecap="round"/>
<!-- small cylinders -->
<rect x="1175" y="842" width="28.6" height="32" fill="#e93526"/>
<ellipse cx="1189.3" cy="842" rx="14.3" ry="3.5" fill="#f4584a"/>
<rect x="1202" y="838" width="74" height="40" fill="#e63223"/>
<!-- motor body -->
<rect x="1153" y="690" width="138.5" height="152" fill="url(#gBody)"/>
<g stroke="#b52013" stroke-width="2.6">
<path d="M1160 712 V800 M1166 712 V806 M1172 712 V812 M1178 712 V818 M1184 712 V822 M1190 712 V826 M1196 712 V828"/>
<path d="M1211 711 V747 M1217 711 V747 M1223 711 V747 M1229 711 V747 M1235 711 V747 M1247 711 V747 M1253 711 V747 M1259 711 V747 M1265 711 V747 M1271 711 V747"/>
</g>
<!-- upper band -->
<path d="M1150.9 672.4 H1292.7 V696 Q1222 716 1150.9 700 Z" fill="#f23d2d"/>
<path d="M1150.9 690 Q1222 712 1292.7 690 V696 Q1222 716 1150.9 700 Z" fill="#d92c1d"/>
<!-- terminal box -->
<polygon points="1202,744.6 1296,744.6 1296,840.4 1208.7,840.4" fill="#f03a2a"/>
<polygon points="1202,744.6 1224,746 1228,840.4 1208.7,840.4" fill="#e23021"/>
<polygon points="1181,752 1202,752 1202,760 1181,760" fill="#f04a3b"/>
<!-- cap -->
<path d="M1176 629.7 H1270 Q1274.2 629.7 1277 633 L1292.7 652.2 V672.4 H1150.9 V652.2 L1167 633 Q1170 629.7 1176 629.7 Z" fill="url(#gCap)" opacity="0.95"/>
<path d="M1150.9 670 H1292.7" stroke="#e8483b" stroke-width="1.5" stroke-dasharray="3 12"/>
</g>

<g id="callout" font-family="Liberation Sans, sans-serif" font-weight="bold" fill="#fff">
<rect x="1239.2" y="1017" width="98.2" height="57.2" fill="#2a7fdd"/>
<rect x="1358.8" y="1017" width="383" height="57.2" fill="#2a7fdd"/>
<rect x="1239.2" y="1087" width="98.2" height="57" fill="#3a4049"/>
<rect x="1358.8" y="1087" width="383" height="57" fill="#3c424c"/>
<rect x="1239.2" y="1156.5" width="98.2" height="57.3" fill="#848c9a" opacity="0.95"/>
<rect x="1358.8" y="1156.5" width="383" height="57.3" fill="#848c9a" opacity="0.95"/>
<text x="1373" y="1057.2" font-size="32" textLength="350.6" lengthAdjust="spacingAndGlyphs">Maintain hydraulic system</text>
<text x="1373" y="1126.4" font-size="32" textLength="102" lengthAdjust="spacingAndGlyphs">10000 h</text>
<text x="1373" y="1197" font-size="32" textLength="258" lengthAdjust="spacingAndGlyphs" fill="#eef0f3">See documentation</text>

<path d="M1282.0 1025.6 L1282.6 1020.4 L1290.0 1020.4 L1290.6 1025.6 L1296.0 1027.8 L1300.1 1024.6 L1305.3 1029.8 L1302.1 1033.9 L1304.3 1039.3 L1309.5 1039.9 L1309.5 1047.3 L1304.3 1047.9 L1302.1 1053.3 L1305.3 1057.4 L1300.1 1062.6 L1296.0 1059.4 L1290.6 1061.6 L1290.0 1066.8 L1282.6 1066.8 L1282.0 1061.6 L1276.6 1059.4 L1272.5 1062.6 L1267.3 1057.4 L1270.5 1053.3 L1268.3 1047.9 L1263.1 1047.3 L1263.1 1039.9 L1268.3 1039.3 L1270.5 1033.9 L1267.3 1029.8 L1272.5 1024.6 L1276.6 1027.8 Z M1299.1 1043.6 A12.8 12.8 0 1 0 1273.5 1043.6 A12.8 12.8 0 1 0 1299.1 1043.6 Z" fill="#fff" fill-rule="evenodd" stroke="#fff" stroke-width="1.5" stroke-linejoin="round"/>
<g transform="translate(1286.3 1043.6) rotate(-45)" fill="#fff">
<rect x="-1.3" y="-6" width="2.6" height="12"/>
<path d="M-3.2 -10.5 A3.6 3.6 0 1 0 3.2 -10.5 L1.3 -10.5 L1.3 -7.6 L-1.3 -7.6 L-1.3 -10.5 Z"/>
<path d="M-3.2 10.5 A3.6 3.6 0 1 1 3.2 10.5 L1.3 10.5 L1.3 7.6 L-1.3 7.6 L-1.3 10.5 Z"/>
</g>
<circle cx="1286.3" cy="1116.6" r="19.8" fill="none" stroke="#fff" stroke-width="3.6"/>
<path d="M1285.8 1103.5 V1117.3 H1299" fill="none" stroke="#fff" stroke-width="3.2"/>
<g fill="none" stroke="#eceef2" stroke-width="1.5" stroke-linejoin="round">
<rect x="1266" y="1174.2" width="40.6" height="32.6" rx="2"/>
<path d="M1277.5 1174 V1169 Q1277.5 1167 1279.5 1167 H1293 Q1295 1167 1295 1169 V1174"/>
<path d="M1266 1183 H1306.6 M1282.5 1179 H1290" />
<path d="M1272 1189 V1192.5 Q1272 1195.5 1275.5 1196 V1204.5 M1279.5 1189 V1192.5 Q1279.5 1195.5 1275.8 1196 M1274.3 1204.5 H1277"/>
<path d="M1287.5 1188.5 h3 v5 h-3z M1289 1193.5 V1204.5 M1286.5 1204.5 h5"/>
<rect x="1296.5" y="1189" width="5.5" height="9" rx="2.5"/>
<path d="M1297.5 1198 L1295.5 1204.5 H1303 L1301 1198"/>
</g>
<!-- pointer -->
<path d="M1238.5 891.7 L1348.6 1010.4 V1215" fill="none" stroke="#fff" stroke-width="6.2" stroke-linejoin="miter"/>
<circle cx="1238.5" cy="891.7" r="21" fill="none" stroke="#fff" stroke-width="5"/>
<circle cx="1238.5" cy="891.7" r="11" fill="#fff"/>
</g>

<g id="kampf">
<g fill="none" stroke="#c6c6c6" stroke-width="1">
<path d="M1749 503 L1719 533 M1755 503 L1725 535 M1752 506 L1790 545 M1758 503 L1796 542 M1812 503 L1770 545 M1818 503 L1776 548 M1814 505 L1852 545 M1820 503 L1858 542 M1874 503 L1832 545 M1880 503 L1838 548 M1876 505 L1885 514 M1885 520 L1862 545 M1733 503 V520 M1737 503 V518 M1795 503 V520 M1799 503 V518 M1857 503 V520 M1861 503 V518 M1838 548 L1858 555 M1885 555 L1862 538"/>
</g>
<path d="M1701.8 525.7 H1718.3 V553 H1701.8 Z" fill="#1b96d9"/>
<path d="M1718.3 554.3 C1718.3 572 1706 581 1692 581 C1675 581 1661.5 570 1660.4 554.6 L1665.7 554.6 C1667 564 1676 571.5 1687 571.5 C1696 571.5 1701.8 565 1701.8 554.3 Z" fill="#1b96d9"/>
<text x="1730" y="553.3" font-family="Liberation Sans, sans-serif" font-weight="bold" font-size="38.5" textLength="127.8" lengthAdjust="spacingAndGlyphs" fill="#1b96d9" stroke="#1b96d9" stroke-width="1.3">KAMPF</text>
</g>

</svg>
<!--ILLU_END-->
</div>
</body>
</html>
